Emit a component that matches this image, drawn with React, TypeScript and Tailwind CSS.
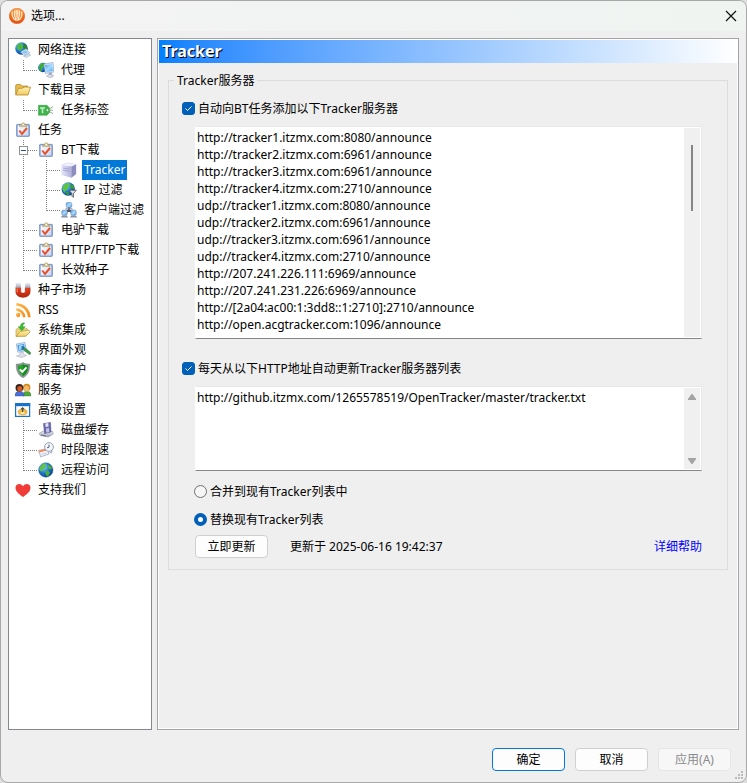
import React, { useState } from 'react';

type IconName =
    | 'network' | 'proxy' | 'folder' | 'tag' | 'task' | 'server' | 'ipfilter' | 'clients'
    | 'magnet' | 'rss' | 'integrate' | 'appearance' | 'shield' | 'service' | 'advanced'
    | 'disk' | 'schedule' | 'globe' | 'heart';

type Guide = 'line' | 'tee' | 'end' | 'box';

interface TreeNode {
    id: string;
    label: string;
    icon: IconName;
    guides: Guide[];
}

const TREE: TreeNode[] = [
    { id: 'network', label: '网络连接', icon: 'network', guides: [] },
    { id: 'proxy', label: '代理', icon: 'proxy', guides: ['end'] },
    { id: 'folders', label: '下载目录', icon: 'folder', guides: [] },
    { id: 'tags', label: '任务标签', icon: 'tag', guides: ['end'] },
    { id: 'tasks', label: '任务', icon: 'task', guides: [] },
    { id: 'bt', label: 'BT下载', icon: 'task', guides: ['box'] },
    { id: 'tracker', label: 'Tracker', icon: 'server', guides: ['line', 'tee'] },
    { id: 'ip', label: 'IP 过滤', icon: 'ipfilter', guides: ['line', 'tee'] },
    { id: 'clients', label: '客户端过滤', icon: 'clients', guides: ['line', 'end'] },
    { id: 'emule', label: '电驴下载', icon: 'task', guides: ['tee'] },
    { id: 'http', label: 'HTTP/FTP下载', icon: 'task', guides: ['tee'] },
    { id: 'seeding', label: '长效种子', icon: 'task', guides: ['end'] },
    { id: 'market', label: '种子市场', icon: 'magnet', guides: [] },
    { id: 'rss', label: 'RSS', icon: 'rss', guides: [] },
    { id: 'integration', label: '系统集成', icon: 'integrate', guides: [] },
    { id: 'appearance', label: '界面外观', icon: 'appearance', guides: [] },
    { id: 'virus', label: '病毒保护', icon: 'shield', guides: [] },
    { id: 'service', label: '服务', icon: 'service', guides: [] },
    { id: 'advanced', label: '高级设置', icon: 'advanced', guides: [] },
    { id: 'cache', label: '磁盘缓存', icon: 'disk', guides: ['tee'] },
    { id: 'schedule', label: '时段限速', icon: 'schedule', guides: ['tee'] },
    { id: 'remote', label: '远程访问', icon: 'globe', guides: ['end'] },
    { id: 'support', label: '支持我们', icon: 'heart', guides: [] },
];

const DEFAULT_TRACKERS = [
    'http://tracker1.itzmx.com:8080/announce',
    'http://tracker2.itzmx.com:6961/announce',
    'http://tracker3.itzmx.com:6961/announce',
    'http://tracker4.itzmx.com:2710/announce',
    'udp://tracker1.itzmx.com:8080/announce',
    'udp://tracker2.itzmx.com:6961/announce',
    'udp://tracker3.itzmx.com:6961/announce',
    'udp://tracker4.itzmx.com:2710/announce',
    'http://207.241.226.111:6969/announce',
    'http://207.241.231.226:6969/announce',
    'http://[2a04:ac00:1:3dd8::1:2710]:2710/announce',
    'http://open.acgtracker.com:1096/announce',
].join('\n');

// Gradients shared by all of the tree icons
const IconDefs: React.FC = () => (
    <svg className="absolute h-0 w-0" aria-hidden="true">
        <defs>
            <radialGradient id="sea" cx="0.35" cy="0.3" r="0.8">
                <stop offset="0" stopColor="#8fd4ff" />
                <stop offset="0.5" stopColor="#1f78d4" />
                <stop offset="1" stopColor="#0a357c" />
            </radialGradient>
            <linearGradient id="screen" x1="0" y1="0" x2="1" y2="1">
                <stop offset="0" stopColor="#4d9be8" />
                <stop offset="0.5" stopColor="#a5dbff" />
                <stop offset="1" stopColor="#4aa4ee" />
            </linearGradient>
            <linearGradient id="gold" x1="0" y1="0" x2="0" y2="1">
                <stop offset="0" stopColor="#fff5b8" />
                <stop offset="1" stopColor="#efc658" />
            </linearGradient>
            <linearGradient id="paper" x1="0" y1="0" x2="1" y2="1">
                <stop offset="0" stopColor="#ffffff" />
                <stop offset="1" stopColor="#c9d6f0" />
            </linearGradient>
            <linearGradient id="steel" x1="0" y1="0" x2="0" y2="1">
                <stop offset="0" stopColor="#f4f4fa" />
                <stop offset="1" stopColor="#9a9eb2" />
            </linearGradient>
            <linearGradient id="lilac" x1="0" y1="0" x2="1" y2="0">
                <stop offset="0" stopColor="#e4e4fa" />
                <stop offset="1" stopColor="#b0b0dc" />
            </linearGradient>
            <linearGradient id="red" x1="0" y1="0" x2="0" y2="1">
                <stop offset="0" stopColor="#e8401c" />
                <stop offset="1" stopColor="#b8240c" />
            </linearGradient>
            <linearGradient id="rssfill" x1="0" y1="0" x2="1" y2="1">
                <stop offset="0" stopColor="#ffb84a" />
                <stop offset="1" stopColor="#f58a1c" />
            </linearGradient>
            <radialGradient id="logo" cx="0.5" cy="0.25" r="0.85">
                <stop offset="0" stopColor="#ffb866" />
                <stop offset="0.5" stopColor="#f3771c" />
                <stop offset="1" stopColor="#dd3c08" />
            </radialGradient>
        </defs>
    </svg>
);

const ICONS: Record<IconName, React.ReactNode> = {
    network: (
        <>
            <circle cx="6.5" cy="6.5" r="6.200" fill="url(#sea)" />
            <path d="M2 3.500l3-2.500 2 0-.5 2 1.500 1.500-1.500 3L4 8.500 2 6.500z" fill="#4db83a" />
            <path d="M8.500 1.500l3 2 .8 4-3 .5-1.500-3z" fill="#2a8a22" />
            <path d="M5.500 10l5.500-3.300 3.800 4L9 13.500z" fill="#e4effa" stroke="#7d9cc0" strokeWidth=".6" />
            <path d="M6.800 10.200L10.800 8l2.300 2.400-4 1.800z" fill="#8fc4ee" />
            <path d="M8.500 14.200l5.500-2.400 1.700 1.200-4.200 2.500z" fill="#d6e0ec" stroke="#8ba3bd" strokeWidth=".5" />
        </>
    ),
    proxy: (
        <>
            <circle cx="4.800" cy="5.500" r="4.700" fill="url(#sea)" />
            <path d="M.8 4.500l2.700-3.500 3 .5-.5 3-2 1.500 0 3.500-2-1z" fill="#3fae2c" />
            <path d="M5.800 2.300L15 .5l.8 9.500-8.300 1.500z" fill="#e3effa" stroke="#6f97c4" strokeWidth=".6" />
            <path d="M6.900 3.300l7.200-1.300.7 7-6.500 1.300z" fill="url(#screen)" />
            <path d="M10.500 11l3-.5.5 2.500-3 .5z" fill="#9fa6ba" />
            <path d="M8.500 14l3-1.500 4 .5-.5 1.800-3.500 1z" fill="#dadce8" stroke="#9b9fb2" strokeWidth=".5" />
        </>
    ),
    folder: (
        <>
            <path d="M.7 12.500V3.500l.8-1h4L7 4h5.500v3z" fill="#e7bb4c" stroke="#b58a2a" strokeWidth=".8" />
            <path d="M.8 13L3.500 6.300h4L9 5.100h6.600L13 13z" fill="url(#gold)" stroke="#b98c2b" strokeWidth=".8" />
        </>
    ),
    tag: (
        <>
            <path d="M.5 3.300h8.500l2.500 2.700v4.500L9 13.200H.5z" fill="#3db54a" stroke="#2c9a39" strokeWidth=".5" />
            <path d="M2 6h5M4.500 6v5.200" stroke="#c9f2cc" strokeWidth="1.500" />
            <circle cx="9.500" cy="8.200" r="1" fill="#fff" />
            <path d="M10 8l5-3.500M10 8.500l5 3.200M11 8.200h4" stroke="#6b9a68" strokeWidth=".8" fill="none" />
        </>
    ),
    task: (
        <>
            <rect x="1.500" y="2.300" width="13" height="12.200" rx="1" fill="#86a3d6" stroke="#5f7fbb" strokeWidth=".6" />
            <rect x="2.700" y="3.300" width="10.600" height="10.200" fill="url(#paper)" />
            <path d="M4.500 4.600V3h2c0-3 3.500-3 3.500 0h2v1.600z" fill="#dccb96" stroke="#9d8d5a" strokeWidth=".5" />
            <circle cx="8.200" cy="2.500" r=".8" fill="#fff" />
            <path d="M4.300 8.500l2.700 3.500 5-6" fill="none" stroke="#e8502a" strokeWidth="2" />
        </>
    ),
    server: (
        <>
            <path d="M1 3.300L5.500 1l9.500 1.500v9.500l-4.500 3.500L1 12.500z" fill="#d4d4f0" stroke="#b0b0d4" strokeWidth=".5" />
            <path d="M1 3.300L5.500 1l9.500 1.500-4.500 2z" fill="#f2f2ff" />
            <path d="M1 3.300l9.500 1.200v11L1 12.500z" fill="url(#lilac)" />
            <path d="M10.500 4.500l4.500-2V12l-4.500 3.500z" fill="#8d8dc0" />
            <path d="M2 6l6.500 1.200M2 8.200l6.500 1.200" stroke="#9a9ac8" strokeWidth=".8" />
        </>
    ),
    ipfilter: (
        <>
            <circle cx="7.200" cy="7" r="6.700" fill="url(#sea)" />
            <path d="M1.200 6l2.500-4L8 .700l1.500 2L7 4.200l.5 2.500-3 2L3.200 11z" fill="#5cc441" />
            <path d="M9.500 2.500l3 1 1 3-3 .5-1.500-2zM4.500 10l3 0 1 3-3-.5z" fill="#3a9d2b" />
            <path d="M8 8.200h7.300l-2.800 3.300v3.800l-1.600-1v-2.800z" fill="#e3e5ea" stroke="#4b5361" strokeWidth=".8" />
        </>
    ),
    clients: (
        <>
            <path d="M8 5v4M8 8L4 11M8 8l4 3" stroke="#4a5060" strokeWidth="2" />
            <rect x="5.200" y=".4" width="5.600" height="5.200" rx="1.500" fill="url(#screen)" stroke="#6d85b0" strokeWidth=".6" />
            <path d="M5 6.200h6l1 1.300H4z" fill="#8a92a8" />
            <rect x=".8" y="8.200" width="5.400" height="5" rx="1.500" fill="url(#screen)" stroke="#6d85b0" strokeWidth=".6" />
            <path d="M1 13.600h5l1 1.800H0z" fill="#8a92a8" />
            <rect x="9.800" y="8.200" width="5.400" height="5" rx="1.500" fill="url(#screen)" stroke="#6d85b0" strokeWidth=".6" />
            <path d="M10 13.600h5l1 1.800H9z" fill="#8a92a8" />
        </>
    ),
    magnet: (
        <>
            <path d="M.8 5.500h5V9.500c0 2 4.400 2 4.400 0v-4h5V10c0 7.200-14.400 7.200-14.400 0z" fill="url(#red)" stroke="#95200f" strokeWidth=".4" />
            <path d="M.8.800h5v5h-5zM10.200.800h5v5h-5z" fill="url(#steel)" />
            <path d="M2.200 6.500v4" stroke="#ff8560" strokeWidth="1" />
        </>
    ),
    rss: (
        <>
            <circle cx="3.200" cy="13" r="2.200" fill="url(#rssfill)" />
            <path d="M1.400 7.300a8.500 8.500 0 0 1 7.800 8" fill="none" stroke="url(#rssfill)" strokeWidth="2.700" />
            <path d="M1.400 2.300a13.500 13.500 0 0 1 12.800 13" fill="none" stroke="url(#rssfill)" strokeWidth="2.700" />
        </>
    ),
    integrate: (
        <>
            <path d="M1 14V7.500l1.500-1 3 1 6.500-1 1 3z" fill="#f0d878" stroke="#b09338" strokeWidth=".6" />
            <path d="M1 14.500l4-5L14 8.200l1.200 1.600-4.400 4.500z" fill="url(#gold)" stroke="#b09338" strokeWidth=".7" />
            <path d="M9 .7C6 1 5.300 2.800 5.300 4.800H3l3.900 4 3.300-4H7.800c0-1.500.2-2.700 2-3.500z" fill="#3cba32" stroke="#218a20" strokeWidth=".4" />
        </>
    ),
    appearance: (
        <>
            <path d="M1.300 2l8.700-1.500 1.300 8-8.500 1.800z" fill="#dcebf9" stroke="#7096c4" strokeWidth=".6" />
            <path d="M2.500 3l6.600-1.100 1 5.800-6.500 1.300z" fill="#3f97ea" />
            <path d="M4 3.500l4.500-.8-3.500 5.500-.8.200z" fill="#a8dcff" />
            <path d="M5 10.500l3-.5 1 2.500 2.500 1-4.500 2-5.500-1.500L5 12.500z" fill="#dfe2ec" stroke="#9aa0b3" strokeWidth=".5" />
            <path d="M7 5l4 1.500 4.500 4c1 1.500-.8 2.500-1.800 1.500L8.500 8z" fill="#3c9a46" stroke="#2b6f3a" strokeWidth=".5" />
            <path d="M6 4.300l3 .5-1 2.500z" fill="#2a5fa4" />
        </>
    ),
    shield: (
        <>
            <path d="M8 .5c2 1.300 4.300 1.700 6.700 1.600C15 9 12.700 13.500 8 15.700 3.300 13.500 1 9 1.300 2.100 3.700 2.200 6 1.800 8 .5z" fill="#8e979b" stroke="#6c777a" strokeWidth=".5" />
            <path d="M8 2.200c1.600 1 3.400 1.400 5.300 1.400-.1 5-1.700 8.400-5.300 10.500C4.400 12 2.800 8.600 2.700 3.600 4.600 3.600 6.400 3.200 8 2.200z" fill="#27a32b" />
            <path d="M8 2.200V14.100c3.600-2.100 5.200-5.500 5.300-10.500C11.400 3.600 9.600 3.200 8 2.200z" fill="#128c1e" />
            <path d="M4.800 7.300l2.500 2.600 4.200-4.600" fill="none" stroke="#fff" strokeWidth="1.900" />
        </>
    ),
    service: (
        <>
            <path d="M8 14c0-4 1.500-4.500 3.800-4.500s4.200.5 4.200 4.500z" fill="#4fa83b" stroke="#317a24" strokeWidth=".4" />
            <circle cx="11.700" cy="5.500" r="3.700" fill="#d98a1c" />
            <ellipse cx="11.500" cy="6.400" rx="2.500" ry="2.900" fill="#f3bd6a" />
            <path d="M0 14c0-4 2-4.500 4.500-4.500S9 10 9 14z" fill="#4b6fd8" stroke="#2e4a9a" strokeWidth=".4" />
            <circle cx="4.400" cy="5.800" r="3.900" fill="#33241e" />
            <ellipse cx="4.800" cy="6.800" rx="2.500" ry="2.800" fill="#cf5a26" />
        </>
    ),
    advanced: (
        <>
            <rect x=".6" y="1.600" width="14" height="12.800" fill="#fff" stroke="#1773d0" strokeWidth="1.200" />
            <path d="M0 1h15.200v3.200H0z" fill="#1773d0" />
            <ellipse cx="7.600" cy="10" rx="4.500" ry="3" fill="#f0b840" stroke="#d09c30" strokeWidth=".5" />
            <path d="M7.600 5.500v5M6 7.300l1.600-1.600 1.600 1.600" stroke="#4a4a4a" strokeWidth="1.100" fill="none" />
            <ellipse cx="7.600" cy="10.900" rx="2.200" ry=".9" fill="#fff2bc" />
        </>
    ),
    disk: (
        <>
            <path d="M1.300 11.300l4-2.300 9.400.5.5 2.500-5 3-8-1.500z" fill="url(#steel)" stroke="#8c90a4" strokeWidth=".6" />
            <path d="M5.500 1.500l7-1 .5 9.500-6.500 1.500z" fill="#6a69ae" stroke="#4b4a88" strokeWidth=".5" />
            <path d="M7.300 1.400l3-.4.3 3.500-3 .5z" fill="#e4e4f6" />
            <path d="M8 6.500l3-.5.300 4-3 .7z" fill="#c4c4e8" />
            <path d="M3 12.800l5 1.200" stroke="#5c6072" strokeWidth=".8" />
        </>
    ),
    schedule: (
        <>
            <path d="M.7 8.500l8.500-2 1.800 5.500-8.300 2.900z" fill="#f2f4fb" stroke="#9099b3" strokeWidth=".7" />
            <path d="M.7 8.500l8.500-2 .6 1.800-8.400 2.200z" fill="#f08b62" />
            <path d="M3.200 12.500l5.500-1.600" stroke="#c6ccde" strokeWidth="1" />
            <path d="M11.500 11l3.500-3-1.500 3.500z" fill="#9aa2b5" />
            <circle cx="11" cy="5" r="4.400" fill="#f3f6fb" stroke="#98a0b4" strokeWidth="1" />
            <path d="M11 2.500V5.200L9 5.800" stroke="#48506a" strokeWidth=".9" fill="none" />
        </>
    ),
    globe: (
        <>
            <circle cx="7.800" cy="8" r="7.200" fill="url(#sea)" stroke="#0d4a8c" strokeWidth=".4" />
            <path d="M2.500 4.500L5.500 1.500l3 .2L7 3.700l1 2-3 1.300-.5 2L3 9.500 1.500 7.500z" fill="#5cc441" />
            <path d="M10 2.800l3.200 1.700.8 2.500-2.500.3-2-1.500zM6.500 9.500l3-1 2.500 2-1.500 3-2 .8-.8-2.500z" fill="#48b033" />
        </>
    ),
    heart: (
        <path d="M8 15C3 11.500.5 8.800.5 5.700.5 1.700 5.800.7 8 4.300 10.200.7 15.500 1.700 15.500 5.700 15.500 8.800 13 11.500 8 15z" fill="#f03c38" />
    ),
};

const GuideCell: React.FC<{ kind: Guide }> = ({ kind }) => (
    <svg width="23" height="20" viewBox="0 0 23 20" className="shrink-0" shapeRendering="crispEdges" aria-hidden="true">
        <path d={kind === 'end' ? 'M8.500 1V12' : 'M8.500 1V20'} stroke="#808080" strokeDasharray="1 1" />
        {kind !== 'line' && <path d="M9 11.500H22" stroke="#808080" strokeDasharray="1 1" />}
        {kind === 'box' && (
            <>
                <rect x="4.500" y="7.500" width="8" height="8" fill="#fff" stroke="#919191" />
                <path d="M6 11.500h5" stroke="#30479a" />
            </>
        )}
    </svg>
);

interface TreeRowProps {
    node: TreeNode;
    selected: boolean;
    onSelect: (id: string) => void;
}

const TreeRow: React.FC<TreeRowProps> = ({ node, selected, onSelect }) => (
    <li className="flex h-5 items-center pl-1.5">
        {node.guides.map((kind, i) => <GuideCell key={i} kind={kind} />)}
        <svg width="16" height="16" viewBox="0 0 16 16" className="mt-0.5 shrink-0" aria-hidden="true">{ICONS[node.icon]}</svg>
        <button
            type="button"
            onClick={() => onSelect(node.id)}
            className={`mt-0.5 ml-[5px] h-5 px-0.5 whitespace-nowrap leading-5 ${selected ? 'bg-[#0078d7] text-white' : 'text-black'}`}
        >
            {node.label}
        </button>
    </li>
);

const CHECKBOX = 'peer h-[13px] w-[13px] shrink-0 appearance-none rounded-[3px] border border-[#868686] bg-white checked:border-[#005fb8] checked:bg-[#005fb8]';
const RADIO = 'h-[13px] w-[13px] shrink-0 appearance-none rounded-full border border-[#707070] bg-[#f6f6f6] checked:border-4 checked:border-[#005fb8] checked:bg-white';
const BUTTON = 'h-[23px] w-[73px] rounded-[4px] border bg-[#fdfdfd] leading-5';

interface CheckProps {
    label: string;
    checked: boolean;
    onChange: (value: boolean) => void;
}

const Check: React.FC<CheckProps> = ({ label, checked, onChange }) => (
    <label className="flex h-5 w-fit items-center gap-[3px]">
        <span className="relative flex">
            <input type="checkbox" className={CHECKBOX} checked={checked} onChange={e => onChange(e.target.checked)} />
            <svg viewBox="0 0 13 13" className="pointer-events-none absolute inset-0 hidden peer-checked:block" aria-hidden="true">
                <path d="M3.500 6.500l2 2 4-4" fill="none" stroke="#fff" strokeWidth="1" />
            </svg>
        </span>
        <span className="pt-0.5">{label}</span>
    </label>
);

interface UrlBoxProps {
    label: string;
    value: string;
    onChange: (value: string) => void;
    className: string;
    children: React.ReactNode;
}

const UrlBox: React.FC<UrlBoxProps> = ({ label, value, onChange, className, children }) => (
    <div className={`mr-3 ml-[13px] mt-2 flex border border-[#e8e8e8] border-b-[#868686] border-l-white bg-white ${className}`}>
        <textarea
            aria-label={label}
            value={value}
            spellCheck={false}
            onChange={e => onChange(e.target.value)}
            className="flex-1 resize-none overflow-hidden pt-0.5 pl-px leading-[17px] outline-none"
        />
        <div className="m-px flex w-4 flex-col items-center bg-[#f0f0f0]">{children}</div>
    </div>
);

const TrackerPanel: React.FC = () => {
    const [addTrackers, setAddTrackers] = useState(true);
    const [autoUpdate, setAutoUpdate] = useState(true);
    const [trackers, setTrackers] = useState(DEFAULT_TRACKERS);
    const [source, setSource] = useState('http://github.itzmx.com/1265578519/OpenTracker/master/tracker.txt');
    const [mode, setMode] = useState<'merge' | 'replace'>('replace');

    return (
        <section className="min-w-0 flex-1 border border-[#a3a3a9] bg-[#efefef]">
            <div className="h-full border border-white">
                <h1 className="h-[23px] bg-linear-to-r from-[#0080ff] to-white pl-[3px] text-base leading-[23px] font-bold text-white [text-shadow:1px_1px_0_#000]">
                    Tracker
                </h1>
                <fieldset className="mx-[9px] mt-[7px] border border-[#dcdcdc] px-[13px] pb-[11px]">
                    <legend className="-ml-2 h-5 px-[3px] pt-px leading-5">Tracker服务器</legend>
                    <div className="mt-2">
                        <Check label="自动向BT任务添加以下Tracker服务器" checked={addTrackers} onChange={setAddTrackers} />
                    </div>
                    <UrlBox label="Tracker服务器" value={trackers} onChange={setTrackers} className="h-[213px]">
                        <div className="mt-[17px] h-[66px] w-0.5 bg-[#868686]"></div>
                    </UrlBox>
                    <div className="mt-[19px]">
                        <Check label="每天从以下HTTP地址自动更新Tracker服务器列表" checked={autoUpdate} onChange={setAutoUpdate} />
                    </div>
                    <UrlBox label="HTTP地址" value={source} onChange={setSource} className="h-[85px]">
                        <svg width="8" height="6" viewBox="0 0 8 6" className="mt-1.5" aria-hidden="true"><path d="M3.500 0h1L8 5v1H0V5z" fill="#a3a3a3" /></svg>
                        <svg width="8" height="6" viewBox="0 0 8 6" className="mt-auto mb-[5px]" aria-hidden="true"><path d="M0 0h8v1L4.500 6h-1L0 1z" fill="#a3a3a3" /></svg>
                    </UrlBox>
                    <label className="mt-2.5 ml-3 flex h-5 w-fit items-center gap-[3px]">
                        <input type="radio" name="mode" className={RADIO} checked={mode === 'merge'} onChange={() => setMode('merge')} />
                        <span className="pt-0.5">合并到现有Tracker列表中</span>
                    </label>
                    <label className="mt-2 ml-3 flex h-5 w-fit items-center gap-[3px]">
                        <input type="radio" name="mode" className={RADIO} checked={mode === 'replace'} onChange={() => setMode('replace')} />
                        <span className="pt-0.5">替换现有Tracker列表</span>
                    </label>
                    <div className="mr-3 ml-[13px] mt-1.5 flex items-center">
                        <button type="button" className={`${BUTTON} border-[#d0d0d0]`}>立即更新</button>
                        <span className="ml-[22px]">更新于 2025-06-16 19:42:37</span>
                        <a href="#help" className="ml-auto text-[#0000ff]">详细帮助</a>
                    </div>
                </fieldset>
            </div>
        </section>
    );
};

const App: React.FC = () => {
    const [selected, setSelected] = useState('tracker');

    return (
        <div className="min-h-screen bg-[#dedede] text-xs text-black [font-family:'Noto_Sans','Noto_Sans_CJK_SC',sans-serif]">
            <IconDefs />
            <div className="relative flex min-h-screen flex-col overflow-hidden rounded-lg border border-[#a8a8a8] bg-[#efefef]">
                <header className="flex h-[30px] items-center bg-linear-to-r from-[#f3f3f3] to-[#eff4f1] pr-[9px] pl-2">
                    <svg width="16" height="16" viewBox="0 0 16 16" aria-hidden="true">
                        <circle cx="8" cy="8" r="7.800" fill="url(#logo)" stroke="#d8622a" strokeWidth=".4" />
                        <path d="M3.400 3.500c-.8 3 .2 6 2.200 8.500M5.800 2.500c-.6 3.500-.1 6.500.9 10M8 2v11M10.200 2.500c.6 3.500.1 6.500-.9 10M12.600 3.500c.8 3-.2 6-2.200 8.500" fill="none" stroke="#fff6e6" strokeWidth="1.100" />
                    </svg>
                    <span className="ml-1.5">选项...</span>
                    <button type="button" aria-label="关闭" className="ml-auto">
                        <svg width="12" height="12" viewBox="0 0 12 12" aria-hidden="true"><path d="M1 1l10 10M11 1L1 11" stroke="#111" strokeWidth="1.200" /></svg>
                    </button>
                </header>

                <main className="flex flex-1 gap-[5px] px-[7px] pt-[7px]">
                    <nav className="w-36 shrink-0 border border-[#828790] bg-white">
                        <ul>
                            {TREE.map(node => (
                                <TreeRow key={node.id} node={node} selected={node.id === selected} onSelect={setSelected} />
                            ))}
                        </ul>
                    </nav>
                    <TrackerPanel />
                </main>

                <footer className="flex justify-end gap-2.5 pt-[18px] pr-[15px] pb-[11px]">
                    <button type="button" className={`${BUTTON} border-[#0078d4]`}>确定</button>
                    <button type="button" className={`${BUTTON} border-[#d0d0d0]`}>取消</button>
                    <button type="button" disabled className="h-[23px] w-[73px] rounded-[4px] border border-[#e5e5e5] bg-[#f7f7f7] leading-5 text-[#8a8a8a]">应用(A)</button>
                </footer>

                {/* resize grip */}
                <svg width="9" height="9" viewBox="0 0 9 9" className="absolute right-0.5 bottom-0.5" aria-hidden="true">
                    <path d="M6 0h2v2H6zM3 3h2v2H3zM6 3h2v2H6zM0 6h2v2H0zM3 6h2v2H3zM6 6h2v2H6z" fill="#bcbcbc" />
                </svg>
            </div>
        </div>
    );
};

export default App;
